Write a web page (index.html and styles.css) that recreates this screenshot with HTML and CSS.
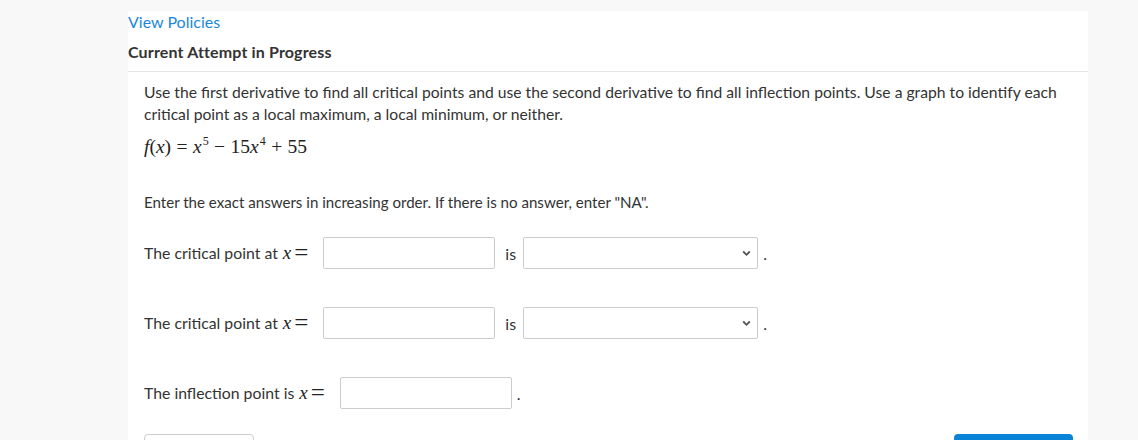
FILE: index.html
```html
<!DOCTYPE html>
<html>
<head>
<meta charset="utf-8">
<link rel="stylesheet" href="styles.css">
</head>
<body>
<div class="panel">
  <div class="head">
    <a class="link" href="#">View Policies</a>
    <div class="title">Current Attempt in Progress</div>
  </div>
  <div class="question">
    <p class="prompt">Use the first derivative to find all critical points and use the second derivative to find all inflection points. Use a graph to identify each critical point as a local maximum, a local minimum, or neither.</p>
    <div class="formula"><i>f</i>(<i>x</i>)<span class="op">=</span><i>x</i><sup>5</sup><span class="op">&minus;</span>15<i>x</i><sup>4</sup><span class="op">+</span>55</div>
    <p class="note">Enter the exact answers in increasing order. If there is no answer, enter "NA".</p>
    <div class="row">
      <span class="label">The critical point at</span>
      <span class="m"><i>x</i><span class="eq">=</span></span>
      <span class="input"></span>
      <span class="is">is</span>
      <span class="select"><svg class="chev" width="9" height="7" viewBox="0 0 9 7"><path d="M1.2 1.5 L4.5 4.8 L7.8 1.5" fill="none" stroke="#555" stroke-width="1.8"/></svg></span>
      <span class="dot">.</span>
    </div>
    <div class="row">
      <span class="label">The critical point at</span>
      <span class="m"><i>x</i><span class="eq">=</span></span>
      <span class="input"></span>
      <span class="is">is</span>
      <span class="select"><svg class="chev" width="9" height="7" viewBox="0 0 9 7"><path d="M1.2 1.5 L4.5 4.8 L7.8 1.5" fill="none" stroke="#555" stroke-width="1.8"/></svg></span>
      <span class="dot">.</span>
    </div>
    <div class="row">
      <span class="label">The inflection point is</span>
      <span class="m"><i>x</i><span class="eq">=</span></span>
      <span class="input"></span>
      <span class="dot">.</span>
    </div>
    <div class="buttons">
      <span class="btn btn-outline"></span>
      <span class="btn btn-primary"></span>
    </div>
  </div>
</div>
</body>
</html>
```
FILE: styles.css
```css
html, body {
  margin: 0;
  padding: 0;
}
body {
  background: #f8f8f8;
  font-family: Lato, "Open Sans", sans-serif;
  font-size: 16px;
  color: #333;
  height: 440px;
  overflow: hidden;
}
.panel {
  background: #fff;
  margin: 11px 0 0 128px;
  width: 960px;
  height: 460px;
}
.head {
  border-bottom: 1px solid #e6e6e6;
  padding-bottom: 8px;
}
.link {
  display: block;
  color: #1a87dc;
  text-decoration: none;
  line-height: 22px;
}
.title {
  font-weight: bold;
  letter-spacing: 0.15px;
  line-height: 22px;
  margin-top: 8px;
}
.question {
  padding: 9px 16px 0 16px;
}
.prompt {
  margin: 0;
  font-size: 15.7px;
  line-height: 22px;
  width: 928px;
}
.formula {
  font-family: "Liberation Serif", "Times New Roman", serif;
  font-size: 19.5px;
  line-height: 22px;
  margin-top: 11px;
  color: #222;
}
.formula sup {
  font-size: 12px;
  line-height: 0;
  vertical-align: 8px;
  margin-left: 1px;
}
.op {
  margin: 0 0.28em;
}
.note {
  margin: 33px 0 0 0;
  font-size: 15.1px;
  line-height: 22px;
}
.row {
  display: flex;
  align-items: center;
  height: 32px;
  margin-top: 24px;
}
.row + .row {
  margin-top: 38px;
}
.label {
  white-space: nowrap;
  font-size: 15.8px;
  position: relative;
  top: -1px;
}
.m {
  display: flex;
  align-items: center;
  font-family: "Liberation Serif", "Times New Roman", serif;
  font-size: 19px;
  margin-left: 5px;
  white-space: nowrap;
  color: #222;
}
.eq {
  font-size: 25px;
  line-height: 20px;
  margin-left: 3px;
}
.input {
  display: block;
  box-sizing: border-box;
  width: 172px;
  height: 32px;
  border: 1px solid #ccc;
  border-radius: 2px;
  margin-left: 15px;
}
.is {
  margin: 0 7px 0 10px;
}
.select {
  display: flex;
  align-items: center;
  justify-content: flex-end;
  box-sizing: border-box;
  width: 235px;
  height: 32px;
  border: 1px solid #ccc;
  border-radius: 2px;
  padding-right: 6px;
}
.dot {
  margin-left: 5px;
}
.buttons {
  display: flex;
  justify-content: space-between;
  margin-top: 25px;
  width: 929px;
}
.btn {
  display: block;
  box-sizing: border-box;
  height: 36px;
  border-radius: 4px;
}
.btn-outline {
  width: 110px;
  border: 1px solid #ccc;
}
.btn-primary {
  width: 119px;
  background: #0a84d6;
}
```
